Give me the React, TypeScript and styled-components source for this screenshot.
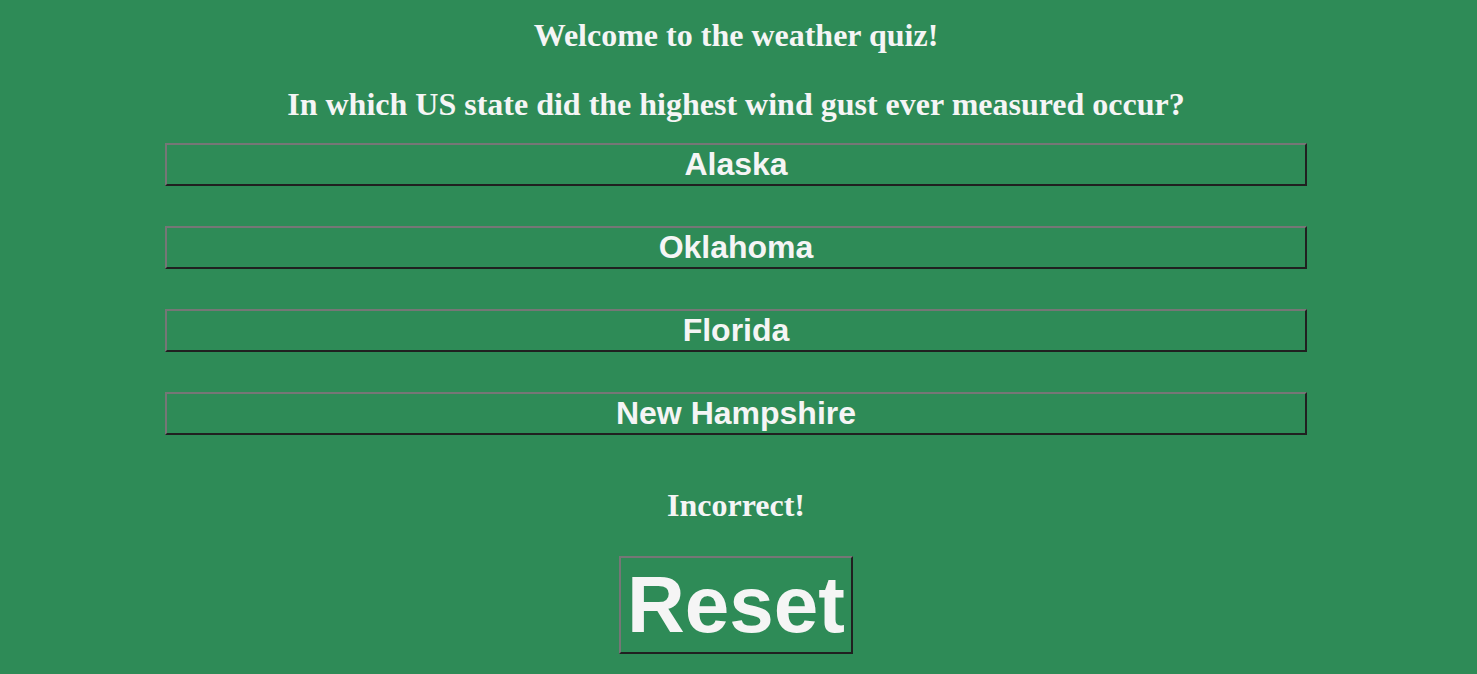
import { useState } from "react";
import styled, { createGlobalStyle } from "styled-components";

const GlobalStyle = createGlobalStyle`
    html, body {
        margin: 0;
        padding: 0;
        background-color: #2e8b57;
    }
`;

const Main = styled.main`
    display: flex;
    flex-direction: column;
    align-items: center;
    padding: 17px 5px 20px 0;
    color: #f5f5f5;
    font-family: "Liberation Serif", "Times New Roman", serif;
`;

const Title = styled.h2`
    margin: 0;
    font-size: 32px;
    font-weight: bold;
    line-height: 37px;
    text-align: center;
`;

const Question = styled(Title)`
    margin-top: 32px;
`;

const AnswerList = styled.section`
    display: flex;
    flex-direction: column;
    gap: 40px;
    width: 1142px;
    margin-top: 20px;
`;

const QuizButton = styled.button<{ $big?: boolean }>`
    box-sizing: border-box;
    background-color: transparent;
    color: #f5f5f5;
    font-family: "Liberation Sans", Arial, sans-serif;
    font-weight: bold;
    font-size: ${(p) => (p.$big ? "80px" : "32px")};
    line-height: ${(p) => (p.$big ? "92px" : "37px")};
    padding: 1px 6px;
    border-width: 2px;
    border-style: solid;
    border-color: #767676 #202020 #202020 #767676;
    cursor: pointer;
`;

const Result = styled(Title)`
    margin-top: 52px;
`;

const ResetWrapper = styled.div`
    margin-top: 32px;
`;

const answers = ["Alaska", "Oklahoma", "Florida", "New Hampshire"];

const App = () => {
    const [result, setResult] = useState("Incorrect!");

    return (
        <>
            <GlobalStyle />
            <Main>
                <Title>Welcome to the weather quiz!</Title>
                <Question>In which US state did the highest wind gust ever measured occur?</Question>
                <AnswerList>
                    {answers.map((answer) => (
                        <QuizButton
                            key={answer}
                            onClick={() => setResult(answer === "New Hampshire" ? "Correct!" : "Incorrect!")}
                        >
                            {answer}
                        </QuizButton>
                    ))}
                </AnswerList>
                <Result>{result}</Result>
                <ResetWrapper>
                    <QuizButton $big onClick={() => setResult("")}>Reset</QuizButton>
                </ResetWrapper>
            </Main>
        </>
    );
};

export default App;
